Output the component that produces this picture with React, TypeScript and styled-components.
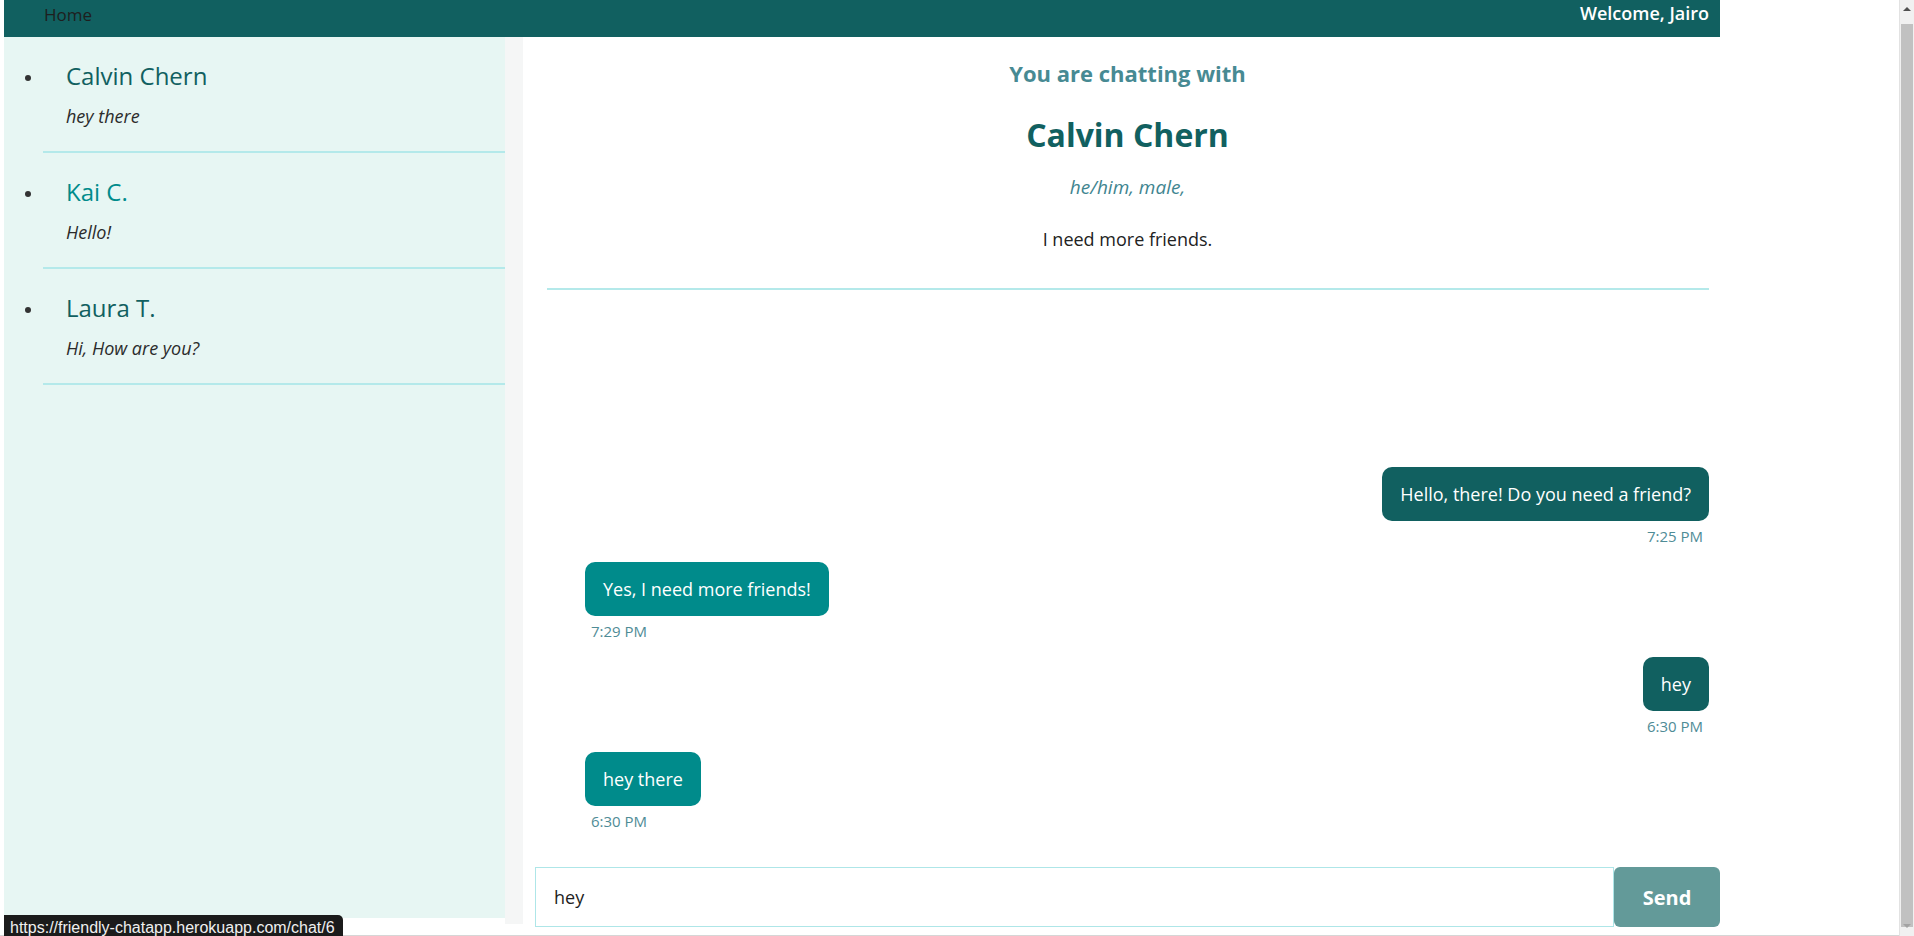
import React from 'react';
import styled, { createGlobalStyle } from 'styled-components';

const GlobalStyle = createGlobalStyle`
  html, body {
    margin: 0;
    padding: 0;
    height: 100%;
    overflow: hidden;
    background: #ffffff;
  }
  body {
    font-family: "Open Sans", "Liberation Sans", sans-serif;
    color: #222222;
  }
  * {
    box-sizing: border-box;
  }
`;

type Conversation = {
  name: string;
  preview: string;
  active?: boolean;
};

type Message = {
  text: string;
  time: string;
  mine: boolean;
};

const conversations: Conversation[] = [
  { name: 'Calvin Chern', preview: 'hey there' },
  { name: 'Kai C.', preview: 'Hello!', active: true },
  { name: 'Laura T.', preview: 'Hi, How are you?' },
];

const messages: Message[] = [
  { text: 'Hello, there! Do you need a friend?', time: '7:25 PM', mine: true },
  { text: 'Yes, I need more friends!', time: '7:29 PM', mine: false },
  { text: 'hey', time: '6:30 PM', mine: true },
  { text: 'hey there', time: '6:30 PM', mine: false },
];

const Window = styled.div`
  display: grid;
  grid-template-columns: 1fr 15px;
  height: 936px;
  width: 1914px;
`;

const Page = styled.div`
  display: flex;
  flex-direction: column;
  padding-left: 4px;
  min-width: 0;
  height: 936px;
  border-bottom: 1px solid #d6d6d6;
`;

const Frame = styled.div`
  width: 1716px;
  display: flex;
  flex-direction: column;
  height: 100%;
`;

const Navbar = styled.nav`
  height: 37px;
  flex-shrink: 0;
  background: #116060;
  display: flex;
  align-items: center;
  justify-content: space-between;
  padding: 0 11px 0 40px;

  .home {
    font-size: 17px;
    color: #1e1e1e;
    line-height: 26px;
    margin-top: -8px;
  }

  .welcome {
    font-size: 18px;
    font-weight: 600;
    color: #ffffff;
    line-height: 26px;
    margin-top: -12px;
  }
`;

const Body = styled.div`
  flex: 1;
  display: flex;
  min-height: 0;
`;

const Sidebar = styled.ul`
  width: 501px;
  height: 881px;
  margin: 0;
  padding: 0;
  list-style: none;
  background: #e7f6f3;
  flex-shrink: 0;
`;

const SidebarTrack = styled.div`
  width: 18px;
  height: 887px;
  background: #f5f6f6;
  flex-shrink: 0;
`;

const ConvoItem = styled.li`
  display: flex;
`;

const BulletCol = styled.div`
  width: 39px;
  flex-shrink: 0;
  display: flex;
  justify-content: flex-start;
  padding: 38px 0 0 21px;

  &::before {
    content: '';
    width: 6px;
    height: 6px;
    border-radius: 50%;
    background: #333333;
  }
`;

const ConvoBody = styled.div`
  flex: 1;
  padding: 23px 0 22px 23px;
  border-bottom: 2px solid #b4e9ea;
`;

const ConvoName = styled.div<{ $active?: boolean }>`
  font-size: 24px;
  line-height: 32px;
  color: ${({ $active }) => ($active ? '#008b8b' : '#116060')};
`;

const ConvoPreview = styled.div`
  margin-top: 11px;
  font-size: 18px;
  line-height: 26px;
  font-style: italic;
  color: #2b2b2b;
`;

const Main = styled.main`
  flex: 1;
  display: flex;
  flex-direction: column;
  padding: 21px 0 8px 12px;
  min-width: 0;
`;

const ChatHeader = styled.header`
  display: flex;
  flex-direction: column;
  align-items: center;
  text-align: center;

  .intro {
    font-size: 22px;
    font-weight: 700;
    line-height: 30px;
    color: #478a93;
  }

  .name {
    margin-top: 25px;
    font-size: 32px;
    font-weight: 700;
    line-height: 44px;
    color: #116060;
  }

  .pronouns {
    margin-top: 17px;
    font-size: 19px;
    font-style: italic;
    line-height: 26px;
    color: #3f8590;
  }

  .bio {
    margin-top: 26px;
    font-size: 18px;
    line-height: 26px;
    color: #222222;
  }
`;

const Divider = styled.hr`
  border: none;
  height: 2px;
  background: #b4e9ea;
  margin: 36px 11px 0 12px;
  flex-shrink: 0;
`;

const MessageList = styled.div`
  flex: 1;
  display: flex;
  flex-direction: column;
  justify-content: flex-end;
  padding: 0 11px 36px 50px;
  gap: 16px;
`;

const MessageRow = styled.div<{ $mine: boolean }>`
  display: flex;
  flex-direction: column;
  align-items: ${({ $mine }) => ($mine ? 'flex-end' : 'flex-start')};
`;

const Bubble = styled.div<{ $mine: boolean }>`
  background: ${({ $mine }) => ($mine ? '#116060' : '#008b8b')};
  color: #ffffff;
  font-size: 18px;
  line-height: 26px;
  padding: 14px 18px;
  border-radius: 10px;
`;

const Time = styled.div`
  margin-top: 5px;
  padding: 0 6px;
  font-size: 15px;
  line-height: 20px;
  color: #4f8c96;
`;

const Composer = styled.form`
  display: flex;
  height: 60px;
  flex-shrink: 0;
`;

const TextInput = styled.input`
  flex: 1;
  height: 100%;
  border: 1px solid #aee6e8;
  padding: 0 18px;
  font-family: inherit;
  font-size: 18px;
  color: #1e1e1e;
  outline: none;
  caret-color: #111111;
`;

const SendButton = styled.button`
  width: 106px;
  height: 100%;
  border: none;
  border-radius: 6px;
  background: #639a99;
  color: #ffffff;
  font-family: inherit;
  font-size: 20px;
  font-weight: 700;
`;

const ScrollTrack = styled.div`
  height: 936px;
  background: #f1f1f1;
  border-left: 1px solid #e2e2e2;
  display: grid;
  grid-template-rows: 14px 1fr 14px;
  justify-items: center;
  align-items: center;
  padding: 2px 0 3px;
`;

const ScrollArrow = styled.div<{ $dir: 'up' | 'down' }>`
  width: 0;
  height: 0;
  border-left: 4px solid transparent;
  border-right: 4px solid transparent;
  ${({ $dir }) =>
    $dir === 'up' ? 'border-bottom: 4px solid #505050;' : 'border-top: 4px solid #a3a3a3;'}
`;

const ScrollThumb = styled.div`
  width: 12px;
  height: 100%;
  margin: 8px 0 6px;
  background: #c1c1c1;
  align-self: stretch;
`;

const StatusTip = styled.div`
  position: fixed;
  left: 4px;
  bottom: 0;
  height: 21px;
  overflow: hidden;
  padding: 0 8px 0 6px;
  background: #1b1b1b;
  border-radius: 0 5px 0 0;
  color: #f0f0f0;
  font-family: "Liberation Sans", Arial, sans-serif;
  font-size: 16px;
  line-height: 26px;
`;

export default function App() {
  return (
    <>
      <GlobalStyle />
      <Window>
        <Page>
          <Frame>
            <Navbar>
              <span className="home">Home</span>
              <span className="welcome">Welcome, Jairo</span>
            </Navbar>
            <Body>
              <Sidebar>
                {conversations.map((c) => (
                  <ConvoItem key={c.name}>
                    <BulletCol />
                    <ConvoBody>
                      <ConvoName $active={c.active}>{c.name}</ConvoName>
                      <ConvoPreview>{c.preview}</ConvoPreview>
                    </ConvoBody>
                  </ConvoItem>
                ))}
              </Sidebar>
              <SidebarTrack />
              <Main>
                <ChatHeader>
                  <span className="intro">You are chatting with</span>
                  <span className="name">Calvin Chern</span>
                  <span className="pronouns">he/him, male,</span>
                  <span className="bio">I need more friends.</span>
                </ChatHeader>
                <Divider />
                <MessageList>
                  {messages.map((m, i) => (
                    <MessageRow key={i} $mine={m.mine}>
                      <Bubble $mine={m.mine}>{m.text}</Bubble>
                      <Time>{m.time}</Time>
                    </MessageRow>
                  ))}
                </MessageList>
                <Composer onSubmit={(e) => e.preventDefault()}>
                  <TextInput defaultValue="hey" autoFocus />
                  <SendButton type="submit">Send</SendButton>
                </Composer>
              </Main>
            </Body>
          </Frame>
        </Page>
        <ScrollTrack>
          <ScrollArrow $dir="up" />
          <ScrollThumb />
          <ScrollArrow $dir="down" />
        </ScrollTrack>
      </Window>
      <StatusTip>https://friendly-chatapp.herokuapp.com/chat/6</StatusTip>
    </>
  );
}
